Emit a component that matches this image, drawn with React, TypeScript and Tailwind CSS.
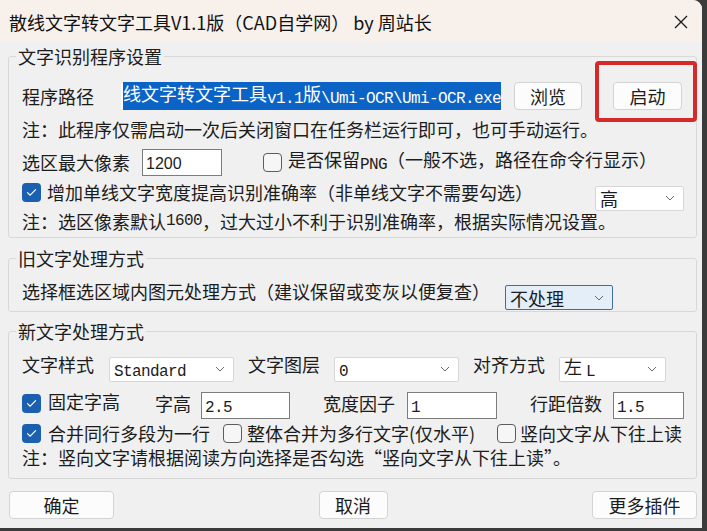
import React from "react";

const CJK = "font-['Noto_Sans_CJK_SC','Noto_Sans',sans-serif]";

function M({ children }: { children: React.ReactNode }) {
  return (
    <span className="font-['Liberation_Mono',monospace] text-[16px] tracking-[-0.6px] align-[-2px]">{children}</span>
  );
}

function Check({ checked }: { checked?: boolean }) {
  if (checked) {
    return (
      <div className="w-[19px] h-[19px] shrink-0 rounded-[4px] bg-[#1a5fb0] flex items-center justify-center">
        <svg width="11" height="9" viewBox="0 0 11 9" fill="none">
          <path d="M1.5 4.6 L4.2 7.2 L9.6 1.6" stroke="white" strokeWidth="1.2" strokeLinecap="round" strokeLinejoin="round" />
        </svg>
      </div>
    );
  }
  return <div className="w-[19px] h-[19px] shrink-0 rounded-[4px] border border-[#5c5c5c] bg-[#f6f6f6]" />;
}

function Chevron() {
  return (
    <svg width="10" height="6" viewBox="0 0 10 6" fill="none" className="shrink-0">
      <path d="M1 1 L5 5 L9 1" stroke="#6a6a6a" strokeWidth="1" />
    </svg>
  );
}

function Select({ children, className = "", focus }: { children: React.ReactNode; className?: string; focus?: boolean }) {
  return (
    <div
      className={
        "h-[25px] shrink-0 flex items-center justify-between pl-[4px] pr-[8px] rounded-[2px] border " +
        (focus ? "bg-[#e3eef9] border-[#3d6e9f] " : "bg-white border-[#d6d6d6] ") +
        className
      }
    >
      <span className="leading-[18px] whitespace-nowrap">{children}</span>
      <Chevron />
    </div>
  );
}

function Box({ children, className = "" }: { children: React.ReactNode; className?: string }) {
  return (
    <div className={"h-[27px] shrink-0 flex items-center bg-white border border-[#7c7c7c] px-[3px] " + className}>
      <span className="leading-[20px]">{children}</span>
    </div>
  );
}

function Btn({ children, className = "" }: { children: React.ReactNode; className?: string }) {
  return (
    <div
      className={
        "h-[28px] shrink-0 flex items-center justify-center bg-[#fcfcfc] border border-[#d3d3d3] rounded-[4px] leading-[18px] " +
        className
      }
    >
      {children}
    </div>
  );
}

function Group({ title, children, className = "" }: { title: string; children: React.ReactNode; className?: string }) {
  return (
    <fieldset className={"ml-[8px] w-[689px] min-w-0 border border-[#d8d8d8] rounded-[3px] px-[13px] " + className}>
      <legend className="ml-[-6px] px-[2px] leading-[18px] text-[18px]">{title}</legend>
      {children}
    </fieldset>
  );
}

export default function App() {
  return (
    <div lang="zh-CN" className={"w-[707px] h-[531px] bg-[#3b3b3b] overflow-hidden text-[18px] text-[#1c1c1c] " + CJK}>
      <div className="relative w-[702px] h-[528px] rounded-tr-[9px] bg-[#f0f0f0] flex flex-col overflow-hidden">
        {/* title bar */}
        <div className="h-[42px] shrink-0 flex items-center justify-between pl-[9px] pr-[14px] bg-[#f7f0eb]">
          <span className="text-[18px] leading-[22px] text-[#111] whitespace-nowrap mt-[2px]">
            散线文字转文字工具V1.1版（CAD自学网） by 周站长
          </span>
          <svg width="14" height="14" viewBox="0 0 14 14" fill="none" className="mt-[2px]">
            <path d="M1 1 L13 13 M13 1 L1 13" stroke="#1a1a1a" strokeWidth="1.3" />
          </svg>
        </div>

        {/* group 1 */}
        <Group title="文字识别程序设置" className="mt-[5px] pt-[16px] h-[191px]">
          <div className="flex items-center h-[30px]">
            <span className="w-[99px] shrink-0 leading-[18px]">程序路径</span>
            <div className="w-[380px] h-[26px] shrink-0 bg-white flex items-center pl-[2px] whitespace-nowrap">
              <span className="bg-[#0c63c6] text-white leading-[22px]">
                线文字转文字工具<M>v1.1</M>版<M>{"\\Umi-OCR\\Umi-OCR.exe"}</M>
              </span>
            </div>
            <Btn className="ml-[13px] w-[68px]">浏览</Btn>
            <Btn className="ml-[31px] w-[69px]">启动</Btn>
          </div>
          <div className="h-[36px] flex items-center leading-[18px] whitespace-nowrap">
            注：此程序仅需启动一次后关闭窗口在任务栏运行即可，也可手动运行。
          </div>
          <div className="flex items-center h-[30px]">
            <span className="w-[120px] shrink-0 leading-[18px]">选区最大像素</span>
            <Box className="w-[80px]">
              <span className="font-['Liberation_Sans',sans-serif] text-[16px]">1200</span>
            </Box>
            <div className="ml-[41px]">
              <Check />
            </div>
            <span className="ml-[6px] leading-[18px] whitespace-nowrap">
              是否保留<M>PNG</M>（一般不选，路径在命令行显示）
            </span>
          </div>
          <div className="flex items-center h-[30px]">
            <Check checked />
            <span className="ml-[6px] leading-[18px] whitespace-nowrap">增加单线文字宽度提高识别准确率（非单线文字不需要勾选）</span>
            <Select className="ml-auto mr-[-1px] mt-[12px] w-[89px]">高</Select>
          </div>
          <div className="h-[28px] flex items-center leading-[16px] whitespace-nowrap">
            注：选区像素默认<M>1600</M>，过大过小不利于识别准确率，根据实际情况设置。
          </div>
        </Group>

        {/* group 2 */}
        <Group title="旧文字处理方式" className="mt-[11px] pt-[9px] pb-[5px]">
          <div className="flex items-center h-[30px]">
            <span className="w-[483px] shrink-0 leading-[18px] whitespace-nowrap">
              选择框选区域内图元处理方式（建议保留或变灰以便复查）
            </span>
            <Select focus className="w-[108px] mt-[13px]">
              不处理
            </Select>
          </div>
        </Group>

        {/* group 3 */}
        <Group title="新文字处理方式" className="mt-[10px] pt-[14px] pb-[12px]">
          <div className="flex items-center h-[30px]">
            <span className="w-[87px] shrink-0 leading-[18px] mb-[10px]">文字样式</span>
            <Select className="w-[125px]">
              <M>Standard</M>
            </Select>
            <span className="ml-[14px] w-[86px] shrink-0 leading-[18px] mb-[10px]">文字图层</span>
            <Select className="w-[125px]">
              <M>0</M>
            </Select>
            <span className="ml-[14px] w-[86px] shrink-0 leading-[18px] mb-[10px]">对齐方式</span>
            <Select className="w-[107px]">
              左 <M>L</M>
            </Select>
          </div>
          <div className="flex items-center h-[30px] mt-[4px]">
            <Check checked />
            <span className="ml-[7px] w-[107px] shrink-0 leading-[18px] mb-[4px]">固定字高</span>
            <span className="w-[46px] shrink-0 leading-[18px]">字高</span>
            <Box className="w-[89px] mt-[4px]">
              <M>2.5</M>
            </Box>
            <span className="ml-[33px] w-[84px] shrink-0 leading-[18px]">宽度因子</span>
            <Box className="w-[90px] mt-[4px]">
              <M>1</M>
            </Box>
            <span className="ml-[33px] w-[83px] shrink-0 leading-[18px]">行距倍数</span>
            <Box className="w-[71px] mt-[4px]">
              <M>1.5</M>
            </Box>
          </div>
          <div className="flex items-center h-[30px]">
            <Check checked />
            <span className="ml-[7px] w-[175px] shrink-0 leading-[18px] whitespace-nowrap">合并同行多段为一行</span>
            <Check />
            <span className="ml-[5px] w-[250px] shrink-0 leading-[18px] whitespace-nowrap">整体合并为多行文字(仅水平)</span>
            <Check />
            <span className="ml-[4px] leading-[18px] whitespace-nowrap">竖向文字从下往上读</span>
          </div>
          <div className="h-[18px] flex items-center leading-[18px] whitespace-nowrap">
            注：竖向文字请根据阅读方向选择是否勾选“竖向文字从下往上读”。
          </div>
        </Group>

        {/* bottom buttons */}
        <div className="mt-[12px] pl-[9px] pr-[5px] flex justify-between">
          <Btn className="w-[105px] border-[#3a3a3a] border-[1.5px]">确定</Btn>
          <Btn className="w-[69px]">取消</Btn>
          <Btn className="w-[105px]">更多插件</Btn>
        </div>

        {/* red annotation box */}
        <div className="absolute left-[595px] top-[61px] w-[102px] h-[61px] border-[4px] border-[#d42a2a] rounded-[4px]" />
      </div>
    </div>
  );
}
